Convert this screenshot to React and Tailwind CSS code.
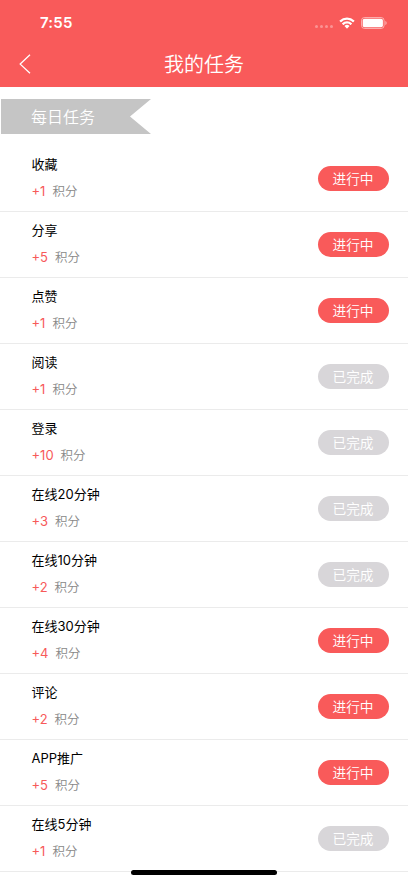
import React from "react";

const tasks = [
    { id: 1, title: '收藏', points: 1, done: false },
    { id: 2, title: '分享', points: 5, done: false },
    { id: 3, title: '点赞', points: 1, done: false },
    { id: 4, title: '阅读', points: 1, done: true },
    { id: 5, title: '登录', points: 10, done: true },
    { id: 6, title: '在线20分钟', points: 3, done: true },
    { id: 7, title: '在线10分钟', points: 2, done: true },
    { id: 8, title: '在线30分钟', points: 4, done: false },
    { id: 9, title: '评论', points: 2, done: false },
    { id: 10, title: 'APP推广', points: 5, done: false },
    { id: 11, title: '在线5分钟', points: 1, done: true },
];

function StatusBar() {
    return (
        <div className="flex h-11 items-center justify-between pl-10 pr-[21px] pt-0.5 text-white">
            <span className="text-[15px] font-semibold leading-5 tracking-[0.2px]">7:55</span>
            <div className="mb-px flex items-center">
                <div className="mr-[6px] mt-[8px] flex gap-[1.5px]">
                    <span className="size-[3.5px] rounded-full bg-white/35"></span>
                    <span className="size-[3.5px] rounded-full bg-white/35"></span>
                    <span className="size-[3.5px] rounded-full bg-white/35"></span>
                    <span className="size-[3.5px] rounded-full bg-white/35"></span>
                </div>
                <svg className="mr-[6px] h-3 w-4" viewBox="0.2 0.2 15.6 11.2" preserveAspectRatio="none" fill="currentColor">
                    <path d="M8 2.8c2.2 0 4.2.85 5.7 2.3.12.1.3.1.42 0l1.1-1.1a.3.3 0 0 0 0-.45 10.4 10.4 0 0 0-14.44 0 .3.3 0 0 0 0 .45l1.1 1.1c.12.1.3.1.42 0A8.2 8.2 0 0 1 8 2.8z" />
                    <path d="M8 6.3c1.2 0 2.36.45 3.25 1.25.12.12.3.12.43 0l1.1-1.1a.3.3 0 0 0 0-.46 7 7 0 0 0-9.56 0 .3.3 0 0 0 0 .46l1.1 1.1c.13.12.31.12.43 0A4.9 4.9 0 0 1 8 6.3z" />
                    <path d="M10.25 8.8a.3.3 0 0 0 0-.46 3.5 3.5 0 0 0-4.5 0 .3.3 0 0 0 0 .46l2.03 2.06c.12.12.32.12.44 0z" />
                </svg>
                <svg className="h-3 w-[26px]" viewBox="0 0 26 12" fill="none">
                    <rect x="0.5" y="0.5" width="22.6" height="11" rx="3" stroke="white" strokeOpacity="0.5" />
                    <rect x="1.7" y="1.7" width="20.2" height="8.6" rx="1.8" fill="white" />
                    <path d="M24.3 4v4c.8-.3 1.4-1.1 1.4-2s-.6-1.7-1.4-2z" fill="white" fillOpacity="0.5" />
                </svg>
            </div>
        </div>
    );
}

function TaskItem({ task }) {
    return (
        <li className="flex h-[66px] items-center justify-between border-b border-[#ebebeb] pl-[31.5px] pr-[19px]">
            <div className="pb-0.5">
                <h3 className="text-[13px] leading-[19px] text-black">{task.title}</h3>
                <p className="mt-2 flex gap-[7px] text-[12.5px] leading-[19px] text-[#888888]">
                    <span className="text-[13px] text-[#f75a5a]">+{task.points}</span>
                    <span className="font-[350]">积分</span>
                </p>
            </div>
            <button
                className={`h-[25px] w-[71px] rounded-full pr-px text-[13.7px] font-[350] leading-[26px] text-white ${task.done ? 'bg-[#d8d6d9]' : 'bg-[#f95a5a]'}`}
            >
                {task.done ? '已完成' : '进行中'}
            </button>
        </li>
    );
}

export default function App() {
    return (
        <div className="relative h-[883px] w-full overflow-hidden bg-white font-[Inter,'Noto_Sans_CJK_SC',sans-serif]">
            <header className="h-[87px] bg-[#f95a5a]">
                <StatusBar />
                <div className="grid h-10 grid-cols-[1fr_auto_1fr] items-center px-5 text-white">
                    <svg className="-ml-px h-5 w-3" viewBox="0 0 12 20" fill="none" stroke="currentColor" strokeWidth="1.3">
                        <path d="M11 0.8L1.2 10.1l9.8 9.2" />
                    </svg>
                    <h1 className="pt-0.5 text-[20px] font-[350] leading-[38px]">我的任务</h1>
                </div>
            </header>

            <h2 className="ml-px mt-3 h-[35px] w-[150px] bg-[#c5c5c5] pl-[30px] text-[16px] font-[350] leading-[36px] text-white [clip-path:polygon(0_0,100%_0,86%_50%,100%_100%,0_100%)]">
                每日任务
            </h2>

            <ul className="mt-3">
                {tasks.map(task => (
                    <TaskItem key={task.id} task={task} />
                ))}
            </ul>

            <div className="absolute bottom-[8px] left-[131px] h-[5px] w-[146px] rounded-full bg-black"></div>
        </div>
    );
}
